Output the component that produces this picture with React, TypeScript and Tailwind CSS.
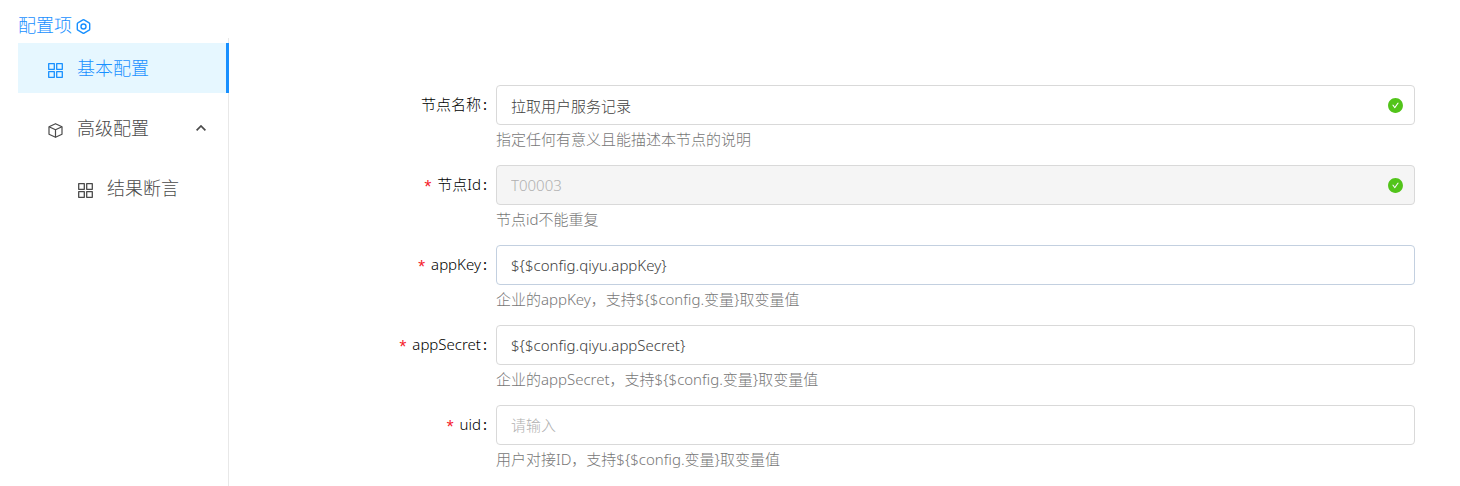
import { AiFillCheckCircle } from "react-icons/ai";

interface Field {
  id: string;
  label: string;
  help: string;
  value?: string;
  required?: boolean;
  disabled?: boolean;
  valid?: boolean;
  hovered?: boolean;
}

const fields: Field[] = [
  { id: "name", label: "节点名称", value: "拉取用户服务记录", help: "指定任何有意义且能描述本节点的说明", valid: true },
  { id: "nodeId", label: "节点Id", value: "T00003", help: "节点id不能重复", required: true, disabled: true, valid: true },
  { id: "appKey", label: "appKey", value: "${$config.qiyu.appKey}", help: "企业的appKey，支持${$config.变量}取变量值", required: true, hovered: true },
  { id: "appSecret", label: "appSecret", value: "${$config.qiyu.appSecret}", help: "企业的appSecret，支持${$config.变量}取变量值", required: true },
  { id: "uid", label: "uid", help: "用户对接ID，支持${$config.变量}取变量值", required: true },
];

const HexagonIcon = () => (
  <svg viewBox="0 0 15 15" className="mt-1 size-[15px]" fill="none" stroke="currentColor" strokeWidth="1.4" strokeLinejoin="round">
    <path d="M6.900 .9a1.200 1.200 0 0 1 1.200 0l5 2.900a1.200 1.200 0 0 1 .6 1v5.400a1.200 1.200 0 0 1-.6 1l-5 2.900a1.200 1.200 0 0 1-1.200 0l-5-2.900a1.200 1.200 0 0 1-.6-1V4.800a1.200 1.200 0 0 1 .6-1z" />
    <circle cx="7.500" cy="7.500" r="2.500" />
  </svg>
);

const AppsIcon = () => (
  <svg viewBox="0 0 15 15" className="mt-1 size-[15px]" fill="none" stroke="currentColor" strokeWidth="1.3" strokeLinejoin="round">
    <rect x=".7" y=".7" width="5.600" height="5.600" />
    <rect x="8.700" y=".7" width="5.600" height="5.600" />
    <rect x=".7" y="8.700" width="5.600" height="5.600" />
    <rect x="8.700" y="8.700" width="5.600" height="5.600" />
  </svg>
);

const CubeIcon = () => (
  <svg viewBox="0 0 15 15" className="mt-1 size-[15px]" fill="none" stroke="currentColor" strokeWidth="1.200" strokeLinejoin="round">
    <path d="M7.500 .7l6.500 3v7.600l-6.500 3-6.500-3V3.700z" />
    <path d="M1 3.700l6.500 3.100L14 3.700M7.500 6.800v7.500" />
  </svg>
);

const ArrowUpIcon = () => (
  <svg viewBox="0 0 10 6" className="w-[10px] h-[6px]" fill="none" stroke="currentColor" strokeWidth="1.700">
    <path d="M.6 5.400L5 1l4.400 4.400" />
  </svg>
);

const Sidebar = () => {
  return (
    <nav className="w-[211px] shrink-0 border-r border-[#e8e8e8] pt-[5px] text-lg text-[#4a4a4a]">
      <button className="flex w-[211px] h-[50px] items-center gap-[14px] border-r-3 border-[#1890ff] bg-[#e6f7ff] pl-[30px] text-[#1890ff]">
        <AppsIcon />
        基本配置
      </button>
      <button className="mt-[10px] flex w-full h-[50px] items-center gap-[14px] pl-[30px] pr-[22px]" aria-expanded="true">
        <CubeIcon />
        <span className="flex-1 text-left">高级配置</span>
        <ArrowUpIcon />
      </button>
      <button className="mt-[10px] flex w-full h-[50px] items-center gap-[14px] pl-[60px]">
        <AppsIcon />
        结果断言
      </button>
    </nav>
  );
};

const FormItem = ({ field }: { field: Field }) => {
  return (
    <div className="flex h-20">
      <label htmlFor={field.id} className="flex h-[38px] w-[267px] shrink-0 items-center justify-end pr-[9px] text-black">
        {field.required && (
          <span className="mr-1 pt-2 font-['Liberation_Mono',monospace] text-lg font-normal text-[#f5222d]">*</span>
        )}
        {field.label}
        <span className="ml-[2px] font-normal">:</span>
      </label>
      <div className="min-w-0 flex-1">
        <div className="relative">
          <input
            id={field.id}
            type="text"
            defaultValue={field.value}
            placeholder="请输入"
            disabled={field.disabled}
            required={field.required}
            className={`block h-10 w-full rounded border px-[14px] placeholder-[#b0b0b0] outline-none ${
              field.hovered ? "border-[#c3d0e0]" : "border-[#d9d9d9]"
            } ${field.disabled ? "bg-[#f5f5f5] text-[#b0b0b0]" : "bg-white text-[#404040]"}`}
          />
          {field.valid && <AiFillCheckCircle className="absolute right-[11px] top-3 size-[17px] text-[#52c41a]" />}
        </div>
        <p className="leading-7 text-[#777777]">{field.help}</p>
      </div>
    </div>
  );
};

export default function App() {
  return (
    <div className="flex min-h-screen flex-col bg-white pl-[18px] font-['Noto_Sans','Noto_Sans_CJK_SC',sans-serif] font-light text-[15px]">
      <header className="flex h-[38px] items-center gap-1 pt-[11px] text-lg text-[#1890ff]">
        配置项
        <HexagonIcon />
      </header>
      <div className="flex flex-1">
        <Sidebar />
        <form className="min-w-0 flex-1 pr-[45px] pt-[47px]">
          {fields.map((field) => (
            <FormItem key={field.id} field={field} />
          ))}
        </form>
      </div>
    </div>
  );
}
